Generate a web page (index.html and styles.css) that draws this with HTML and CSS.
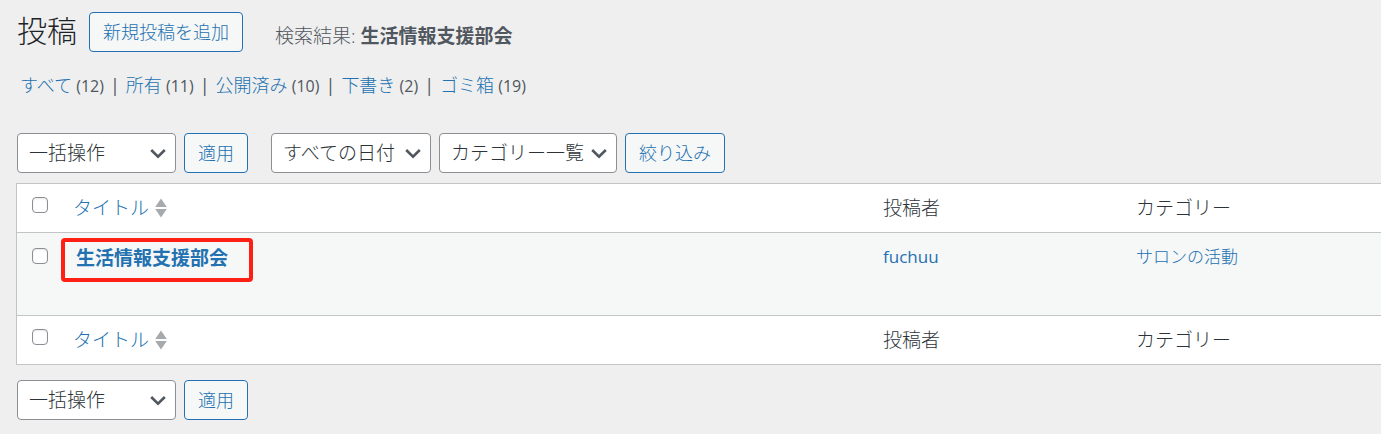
FILE: index.html
```html
<!DOCTYPE html>
<html lang="ja">
<head>
<meta charset="utf-8">
<title>投稿</title>
<link rel="stylesheet" href="styles.css">
</head>
<body>
<main class="wrap">
  <header class="heading">
    <h1 class="heading-title">投稿</h1>
    <button class="button" type="button">新規投稿を追加</button>
    <span class="subtitle">検索結果: <strong>生活情報支援部会</strong></span>
  </header>

  <ul class="views">
    <li><a href="#">すべて</a> (12)</li>
    <li><a href="#">所有</a> (11)</li>
    <li><a href="#">公開済み</a> (10)</li>
    <li><a href="#">下書き</a> (2)</li>
    <li><a href="#">ゴミ箱</a> (19)</li>
  </ul>

  <div class="tablenav">
    <div class="actions">
      <span class="picker picker-bulk">
        <select class="picker-select" aria-label="一括操作を選択"><option>一括操作</option></select>
        <svg class="picker-arrow" viewBox="0 0 16 16" aria-hidden="true"><path d="M1.200 5 8 11.600l6.800-6.600"/></svg>
      </span>
      <button class="button" type="button">適用</button>
    </div>
    <div class="actions">
      <span class="picker picker-date">
        <select class="picker-select" aria-label="日付で絞り込む"><option>すべての日付</option></select>
        <svg class="picker-arrow" viewBox="0 0 16 16" aria-hidden="true"><path d="M1.200 5 8 11.600l6.800-6.600"/></svg>
      </span>
      <span class="picker picker-category">
        <select class="picker-select" aria-label="カテゴリーで絞り込む"><option>カテゴリー一覧</option></select>
        <svg class="picker-arrow" viewBox="0 0 16 16" aria-hidden="true"><path d="M1.200 5 8 11.600l6.800-6.600"/></svg>
      </span>
      <button class="button" type="button">絞り込み</button>
    </div>
  </div>

  <table class="posts">
    <thead>
      <tr>
        <td class="col-check"><input class="check" type="checkbox" aria-label="すべて選択"></td>
        <th class="col-title" scope="col"><a class="sort" href="#">タイトル <svg class="sort-icon" viewBox="0 0 12 20" aria-hidden="true"><path d="M6 0.500l5.800 8.500H.2zM6 19.500L.2 11h11.600z"/></svg></a></th>
        <th class="col-author" scope="col">投稿者</th>
        <th class="col-category" scope="col">カテゴリー</th>
      </tr>
    </thead>
    <tbody>
      <tr class="post">
        <td class="col-check"><input class="check" type="checkbox" aria-label="生活情報支援部会を選択"></td>
        <td class="col-title"><a class="post-title" href="#">生活情報支援部会</a></td>
        <td class="col-author"><a href="#">fuchuu</a></td>
        <td class="col-category"><a href="#">サロンの活動</a></td>
      </tr>
    </tbody>
    <tfoot>
      <tr>
        <td class="col-check"><input class="check" type="checkbox" aria-label="すべて選択"></td>
        <th class="col-title" scope="col"><a class="sort" href="#">タイトル <svg class="sort-icon" viewBox="0 0 12 20" aria-hidden="true"><path d="M6 0.500l5.800 8.500H.2zM6 19.500L.2 11h11.600z"/></svg></a></th>
        <th class="col-author" scope="col">投稿者</th>
        <th class="col-category" scope="col">カテゴリー</th>
      </tr>
    </tfoot>
  </table>

  <div class="tablenav tablenav-bottom">
    <div class="actions">
      <span class="picker picker-bulk">
        <select class="picker-select" aria-label="一括操作を選択"><option>一括操作</option></select>
        <svg class="picker-arrow" viewBox="0 0 16 16" aria-hidden="true"><path d="M1.200 5 8 11.600l6.800-6.600"/></svg>
      </span>
      <button class="button" type="button">適用</button>
    </div>
  </div>
</main>
</body>
</html>
```

FILE: styles.css
```css
* {
  box-sizing: border-box;
}

body {
  margin: 0;
  background: #efefef;
  color: #2c3338;
  font: 300 19px/24px "Open Sans", "Noto Sans CJK JP", sans-serif;
}

a {
  color: #2271b1;
  text-decoration: none;
}

.wrap {
  padding: 12px 0 12px 16px;
}

.heading {
  display: flex;
  align-items: flex-start;
}

.heading-title {
  margin: 0 12px 0 1px;
  color: #1d2327;
  font-size: 30px;
  font-weight: 300;
  line-height: 38px;
}

.button {
  height: 40px;
  padding: 0 13px;
  border: 1px solid #2271b1;
  border-radius: 4px;
  background: #f6f7f7;
  color: #2271b1;
  font: inherit;
  font-size: 18px;
  white-space: nowrap;
}

.subtitle {
  padding: 12px 0 0 32px;
  color: #50575e;
}

.subtitle strong {
  font-weight: 600;
}

.views {
  display: flex;
  margin: 21px 0 35px;
  padding: 0 0 0 4px;
  list-style: none;
  color: #50575e;
  font-size: 16px;
  font-weight: 400;
}

.views a {
  font-size: 18px;
  font-weight: 300;
}

.views li + li::before {
  content: "|";
  margin: 0 6px;
  font-size: 18px;
}

.tablenav {
  display: flex;
  gap: 23px;
  margin-bottom: 10px;
  padding-left: 1px;
}

.tablenav-bottom {
  margin: 15px 0 0;
}

.actions {
  display: flex;
  gap: 8px;
}

.picker {
  display: grid;
  align-items: center;
}

.picker > * {
  grid-area: 1 / 1;
}

.picker-bulk {
  width: 159px;
}

.picker-date {
  width: 160px;
}

.picker-category {
  width: 178px;
}

.picker-select {
  width: 100%;
  height: 40px;
  padding: 0 30px 0 11px;
  appearance: none;
  border: 1px solid #8c8f94;
  border-radius: 4px;
  background: #fff;
  color: #2c3338;
  font: inherit;
}

.picker-arrow {
  justify-self: end;
  width: 16px;
  height: 16px;
  margin-right: 10px;
  fill: none;
  stroke: #50575e;
  stroke-width: 2.6;
  pointer-events: none;
}

.posts {
  width: 100%;
  table-layout: fixed;
  border: 1px solid #c3c4c7;
  border-right: 0;
  border-spacing: 0;
  background: #fff;
}

.posts th,
.posts td {
  padding: 12px;
  font-weight: 300;
  text-align: left;
  vertical-align: top;
}

.posts thead th,
.posts thead td,
.posts .post td {
  border-bottom: 1px solid #c3c4c7;
}

.posts .post td {
  height: 83px;
  background: #f6f7f7;
}

.posts .col-check {
  width: 44px;
  padding: 13px 0 0 15px;
  line-height: 0;
}

.posts .col-author {
  width: 253px;
}

.posts .col-category {
  width: 257px;
}

.posts .post .col-author,
.posts .post .col-category {
  font-size: 17px;
}

.posts .post .col-author {
  font-weight: 400;
}

.posts .post .col-check {
  padding-top: 15px;
}

.posts .post .col-title {
  padding: 5px 0 0;
}

.check {
  width: 16px;
  height: 16px;
  margin: 0;
  appearance: none;
  border: 1px solid #8c8f94;
  border-radius: 4px;
  background: #fff;
  box-shadow: inset 0 1px 2px rgb(0 0 0 / 10%);
}

.sort {
  display: flex;
  align-items: center;
  gap: 6px;
}

.sort-icon {
  width: 12px;
  height: 20px;
  fill: #a7aaad;
}

.post-title {
  display: inline-block;
  padding: 4px 21px 8px 11px;
  border: 4px solid #ff2015;
  border-radius: 4px;
  font-weight: 600;
}
```
